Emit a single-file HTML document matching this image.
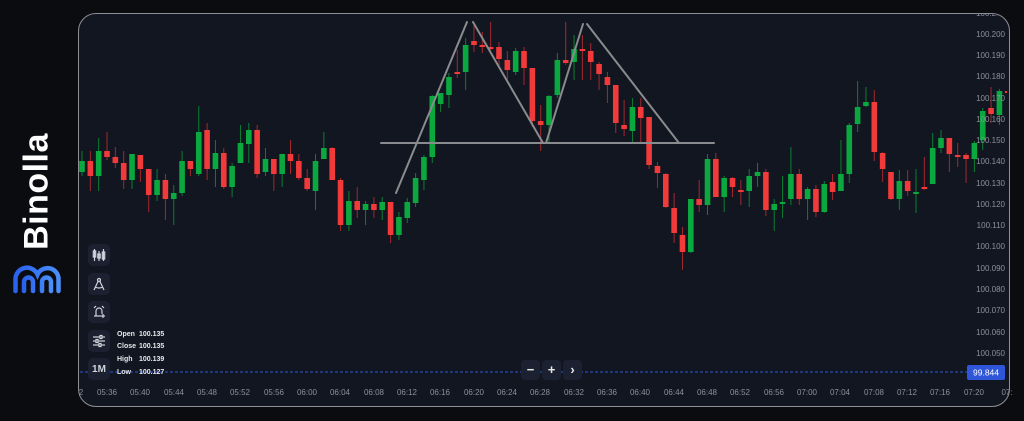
<!DOCTYPE html>
<html><head><meta charset="utf-8"><style>
html,body{margin:0;padding:0;width:1024px;height:421px;overflow:hidden;background:#0b0c10;font-family:"Liberation Sans",sans-serif}
#frame{position:absolute;left:78px;top:13px;width:930px;height:392px;border:1.5px solid #8d8f94;border-radius:18px;background:#121620;overflow:hidden}
svg{position:absolute;left:0;top:0}
.btn{position:absolute;left:88px;width:22px;height:22px;background:#1b2130;border-radius:5px;display:flex;align-items:center;justify-content:center;color:#d0d4dc}
.lg{position:absolute;left:-25px;top:172px;transform:rotate(-90deg);color:#fff;font-weight:bold;font-size:34px;width:124px;text-align:center;letter-spacing:0.5px}
.ohlc{position:absolute;left:117px;font-size:7px;font-weight:bold;color:#e6e8ec}
.ohlc span{position:absolute;left:22px}
.zb{position:absolute;top:360px;width:19px;height:20px;background:#1b2130;border-radius:4px;color:#e6e8ec;font-size:13px;text-align:center;line-height:20px;font-weight:bold}
</style></head><body>
<div class="lg">Binolla</div>
<svg width="1024" height="421" style="z-index:0">
<defs><linearGradient id="lgd" x1="0" y1="0" x2="1" y2="0"><stop offset="0" stop-color="#2a62ee"/><stop offset="1" stop-color="#4b8ef8"/></linearGradient></defs>
<g fill="none" stroke="url(#lgd)" stroke-width="4.5" stroke-linecap="round">
<path d="M15.5 291 V279 a11.5 11.5 0 0 1 22 -4.5 a11 11 0 0 1 21 4.5 V291"/>
<path d="M24 291 V282 a4.5 4.5 0 0 1 9 0 V291 M42 291 V282 a4.5 4.5 0 0 1 9 0 V291"/>
</g>
</svg>
<div id="frame"></div>
<svg id="ch" width="1024" height="421" style="z-index:2">
<defs><clipPath id="cp"><rect x="79" y="14" width="928" height="390" rx="17"/></clipPath></defs>
<g id="cd" clip-path="url(#cp)"></g>
<line x1="80" y1="372" x2="967" y2="372" stroke="#2f56d9" stroke-width="1" stroke-dasharray="3,2"/>
<g stroke="#8a8b8e" stroke-width="2" fill="none" stroke-linecap="round">
<line x1="396" y1="193" x2="467" y2="22"/>
<line x1="473" y1="22" x2="543" y2="143"/>
<line x1="546" y1="143" x2="583" y2="24"/>
<line x1="587" y1="24" x2="679" y2="143"/>
<line x1="381" y1="143" x2="714" y2="143"/>
</g>
<g font-size="8" fill="#8c909a" text-anchor="end" font-family="Liberation Sans,sans-serif">
<text x="1005" y="16" clip-path="url(#cp)">100.210</text>
<text x="1005" y="37">100.200</text><text x="1005" y="58">100.190</text><text x="1005" y="79">100.180</text><text x="1005" y="101">100.170</text><text x="1005" y="122">100.160</text><text x="1005" y="143">100.150</text><text x="1005" y="164">100.140</text><text x="1005" y="186">100.130</text><text x="1005" y="207">100.120</text><text x="1005" y="228">100.110</text><text x="1005" y="249">100.100</text><text x="1005" y="271">100.090</text><text x="1005" y="292">100.080</text><text x="1005" y="313">100.070</text><text x="1005" y="335">100.060</text><text x="1005" y="356">100.050</text>
</g>
<rect x="967" y="365" width="38" height="15" rx="2" fill="#2f56d9"/>
<text x="986" y="375.5" font-size="8.5" fill="#fff" text-anchor="middle" font-family="Liberation Sans,sans-serif">99.844</text>
<g font-size="8" fill="#8c909a" text-anchor="middle" font-family="Liberation Sans,sans-serif">
<text x="81" y="395">2</text>
<text x="107" y="395">05:36</text><text x="140" y="395">05:40</text><text x="174" y="395">05:44</text><text x="207" y="395">05:48</text><text x="240" y="395">05:52</text><text x="274" y="395">05:56</text><text x="307" y="395">06:00</text><text x="340" y="395">06:04</text><text x="374" y="395">06:08</text><text x="407" y="395">06:12</text><text x="440" y="395">06:16</text><text x="474" y="395">06:20</text><text x="507" y="395">06:24</text><text x="540" y="395">06:28</text><text x="574" y="395">06:32</text><text x="607" y="395">06:36</text><text x="640" y="395">06:40</text><text x="674" y="395">06:44</text><text x="707" y="395">06:48</text><text x="740" y="395">06:52</text><text x="774" y="395">06:56</text><text x="807" y="395">07:00</text><text x="840" y="395">07:04</text><text x="874" y="395">07:08</text><text x="907" y="395">07:12</text><text x="940" y="395">07:16</text><text x="974" y="395">07:20</text><text x="1007" y="395">07:</text>
</g>
</svg>
<div style="position:absolute;z-index:3">
<div class="btn" style="top:244px"><svg width="14" height="14" viewBox="0 0 14 14" style="position:static"><g stroke="#d0d4dc" stroke-width="1.2" fill="none"><line x1="2.5" y1="1" x2="2.5" y2="13"/><rect x="1.3" y="3" width="2.4" height="6"/><line x1="7" y1="3" x2="7" y2="13"/><rect x="5.8" y="6" width="2.4" height="4"/><line x1="11.5" y1="1" x2="11.5" y2="13"/><rect x="10.3" y="4" width="2.4" height="7"/></g></svg></div>
<div class="btn" style="top:273px"><svg width="14" height="14" viewBox="0 0 14 14" style="position:static"><g stroke="#d0d4dc" stroke-width="1.2" fill="none"><circle cx="7" cy="3" r="1.5"/><line x1="6" y1="4.5" x2="2" y2="13"/><line x1="8" y1="4.5" x2="12" y2="13"/><path d="M3 10 Q7 12 11 10"/></g></svg></div>
<div class="btn" style="top:301px"><svg width="14" height="14" viewBox="0 0 14 14" style="position:static"><g stroke="#d0d4dc" stroke-width="1.2" fill="none"><path d="M4 11 V6 a3 3 0 0 1 6 0 V9"/><line x1="2" y1="11" x2="9" y2="11"/><path d="M2 3 L4 1 M12 3 L10 1"/><line x1="11" y1="9" x2="11" y2="13"/><line x1="9" y1="11" x2="13" y2="11"/></g></svg></div>
<div class="btn" style="top:330px"><svg width="14" height="14" viewBox="0 0 14 14" style="position:static"><g stroke="#d0d4dc" stroke-width="1.2" fill="none"><line x1="1" y1="3" x2="13" y2="3"/><line x1="1" y1="7" x2="13" y2="7"/><line x1="1" y1="11" x2="13" y2="11"/><rect x="8" y="1.5" width="2" height="3" fill="#1b2130"/><rect x="4" y="5.5" width="2" height="3" fill="#1b2130"/><rect x="7" y="9.5" width="2" height="3" fill="#1b2130"/></g></svg></div>
<div class="btn" style="top:358px;font-size:10px;font-weight:bold">1M</div>
<div class="ohlc" style="top:331px">Open<span>100.135</span></div>
<div class="ohlc" style="top:343px">Close<span>100.135</span></div>
<div class="ohlc" style="top:356px">High<span>100.139</span></div>
<div class="ohlc" style="top:369px">Low<span>100.127</span></div>
<div class="zb" style="left:521px">−</div>
<div class="zb" style="left:542px">+</div>
<div class="zb" style="left:563px">›</div>
</div>
<script>
var d=[[172,161,151,176],[161,176,151,191],[176,151,138,191],[151,157,132,160],[157,163,147,168],[163,180,151,189],[180,154,154,189],[155,169,155,182],[169,195,169,212],[195,180,169,201],[180,199,174,220],[199,193,185,225],[193,161,151,196],[161,169,161,176],[174,132,106,176],[130,169,123,180],[169,153,140,187],[153,187,148,189],[187,166,163,197],[163,143,125,163],[144,130,123,163],[130,174,125,178],[172,159,148,176],[159,174,159,191],[174,154,154,187],[154,161,140,174],[161,178,154,180],[178,189,169,191],[191,161,154,210],[159,148,132,159],[148,180,147,180],[180,225,178,231],[225,201,191,231],[201,210,187,218],[210,204,201,225],[204,210,197,218],[210,202,197,220],
[202,235,202,243],[235,217,212,240],[218,202,198,223],[203,178,173,207],[180,157,155,190],[157,96,95,163],[104,93,93,112],[95,77,73,108],[72,74,50,78],[72,45,38,90],[41,45,25,52],[45,47,32,53],[47,48,22,50],[47,59,42,68],[60,70,51,80],[72,51,48,75],[51,68,47,85],[68,121,68,127],[121,125,105,151],[125,96,95,143],[95,60,53,98],[60,63,22,65],[62,49,35,80],[49,50,35,80],[51,62,43,80],[64,74,62,90],[77,85,72,103],[85,123,85,133],[125,129,100,136],[131,107,98,142],[107,118,98,142],[117,165,117,169],[166,173,162,188],[174,207,173,208],[208,233,193,243],[235,252,227,270],[252,199,199,253],[199,205,180,212],[205,159,154,215],[159,197,153,197],
[197,178,176,212],[178,187,177,197],[190,191,180,205],[191,176,169,207],[176,172,163,187],[172,210,169,216],[210,204,199,231],[203,202,176,218],[199,174,147,205],[174,199,169,205],[199,189,187,220],[189,212,185,217],[212,184,181,213],[182,192,174,200],[191,174,140,191],[174,125,123,183],[124,107,81,132],[106,102,87,107],[102,152,90,161],[153,169,152,182],[172,199,172,200],[199,181,170,210],[181,191,170,196],[193,192,169,213],[187,188,157,190],[184,148,133,184],[148,138,130,153],[138,154,138,172],[155,155,143,167],[155,159,153,183],[159,143,141,172],[140,111,108,150],[108,114,87,123],[115,91,89,125],[91,93,77,100]];
var s='';for(var i=0;i<d.length;i++){var x=82+i*8.34,o=d[i][0],c=d[i][1],h=d[i][2],l=d[i][3];var g=c<o||c==o&&i%2==0;var col=g?'#0aa83f':'#f23a3a',wc=g?'#0b7f33':'#a3282e';var t=Math.min(o,c),b=Math.max(Math.abs(o-c),2);s+='<line x1="'+x+'" y1="'+h+'" x2="'+x+'" y2="'+l+'" stroke="'+wc+'" stroke-width="1"/><rect x="'+(x-2.8)+'" y="'+t+'" width="5.6" height="'+b+'" fill="'+col+'"/>';}
document.getElementById('cd').innerHTML=s;
</script>
</body></html>
